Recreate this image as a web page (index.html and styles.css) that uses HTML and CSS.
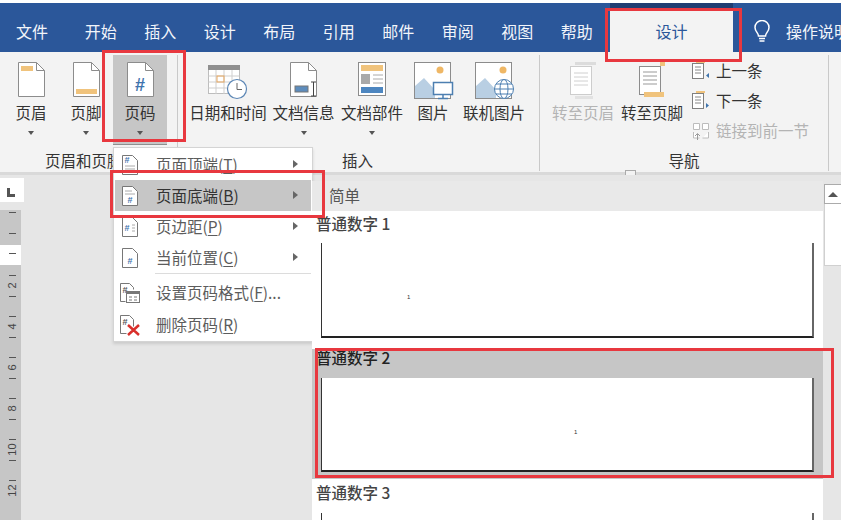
FILE: index.html
```html
<!DOCTYPE html>
<html lang="zh">
<head>
<meta charset="utf-8">
<title>页码</title>
<link rel="stylesheet" href="styles.css">
</head>
<body>
<div class="app">
  <nav class="tabs">
    <span class="tab first">文件</span>
    <span class="tab">开始</span>
    <span class="tab">插入</span>
    <span class="tab">设计</span>
    <span class="tab">布局</span>
    <span class="tab">引用</span>
    <span class="tab">邮件</span>
    <span class="tab">审阅</span>
    <span class="tab">视图</span>
    <span class="tab">帮助</span>
    <span class="tab active">设计</span>
    <svg class="bulb" width="20" height="24" viewBox="0 0 20 24"><path d="M6.500 16c0-3-3.500-4.500-3.500-8.500a7 7 0 0 1 14 0c0 4-3.500 5.500-3.500 8.500z" fill="none" stroke="#fff" stroke-width="1.500"/><path d="M7 18.500h6M7.500 21h5" stroke="#fff" stroke-width="1.500"/></svg>
    <span class="tell">操作说明</span>
  </nav>

  <section class="ribbon">
    <div class="group g1">
      <div class="row">
        <div class="rbtn w56">
          <svg width="44" height="40" viewBox="0 0 44 40"><path d="M9.500 2.500h18l8 8v26h-26z" fill="#fff" stroke="#8c8c8c"/><path d="M27.500 2.500v8h8" fill="none" stroke="#8c8c8c"/><rect x="12" y="6" width="12" height="5" fill="#f0c37c"/></svg>
          <span class="lbl">页眉</span><i class="caret"></i>
        </div>
        <div class="rbtn w54">
          <svg width="44" height="40" viewBox="0 0 44 40"><path d="M9.500 2.500h18l8 8v26h-26z" fill="#fff" stroke="#8c8c8c"/><path d="M27.500 2.500v8h8" fill="none" stroke="#8c8c8c"/><rect x="12" y="29" width="21" height="5" fill="#f0c37c"/></svg>
          <span class="lbl">页脚</span><i class="caret"></i>
        </div>
        <div class="rbtn w54 pressed">
          <svg width="44" height="40" viewBox="0 0 44 40"><path d="M9.500 2.500h18l8 8v26h-26z" fill="#fff" stroke="#8c8c8c"/><path d="M27.500 2.500v8h8" fill="none" stroke="#8c8c8c"/><text x="22" y="31" class="hash">#</text></svg>
          <span class="lbl">页码</span><i class="caret"></i>
        </div>
      </div>
      <div class="glabel">页眉和页脚</div>
    </div>

    <div class="group g2">
      <div class="row">
        <div class="rbtn w80">
          <svg width="44" height="40" viewBox="0 0 44 40"><rect x="2.500" y="5.500" width="31" height="28" fill="#fff" stroke="#bdbdbd"/><rect x="2" y="5" width="32" height="5" fill="#8f8f8f"/><path d="M2.500 16h31M2.500 22h31M2.500 28h31M10 10v24M18 10v24M26 10v24" stroke="#cfcfcf"/><rect x="11" y="16" width="7" height="6" fill="none" stroke="#e8a860"/><circle cx="31" cy="29" r="9.500" fill="#fff" stroke="#5b86b5" stroke-width="1.200"/><path d="M31 23v6.500h5" fill="none" stroke="#666"/></svg>
          <span class="lbl">日期和时间</span>
        </div>
        <div class="rbtn w71">
          <svg width="44" height="40" viewBox="0 0 44 40"><path d="M8.500 2.500h18l8 8v26h-26z" fill="#fff" stroke="#8c8c8c"/><path d="M26.500 2.500v8h8" fill="none" stroke="#8c8c8c"/><rect x="13" y="26" width="13" height="6" fill="#5d8cbc" stroke="#777"/><path d="M29 22h5M29 36h5M31.500 22v14" stroke="#444"/></svg>
          <span class="lbl">文档信息</span><i class="caret"></i>
        </div>
        <div class="rbtn w66">
          <svg width="44" height="40" viewBox="0 0 44 40"><rect x="8.500" y="2.500" width="27" height="33" fill="#fff" stroke="#8c8c8c"/><rect x="11" y="5" width="22" height="6" fill="#f0c37c"/><rect x="11" y="14" width="9" height="10" fill="#a9a9a9"/><path d="M23 15h10M23 19h10M23 23h10" stroke="#aaa"/><rect x="11" y="27" width="22" height="6" fill="#4d86c0"/></svg>
          <span class="lbl">文档部件</span><i class="caret"></i>
        </div>
        <div class="rbtn w56">
          <svg width="44" height="40" viewBox="0 0 44 40"><rect x="3.500" y="2.500" width="36" height="36" fill="#fff" stroke="#8c8c8c"/><circle cx="29" cy="10" r="3.500" fill="#efb765"/><path d="M4 38V26l9-8 11 12v8z" fill="#b9cfe3"/><rect x="22.500" y="22.500" width="19" height="12" fill="#fff" stroke="#4d7fb1" stroke-width="1.500"/><path d="M32 35v3M27 38.500h10" stroke="#4d7fb1" stroke-width="1.500"/></svg>
          <span class="lbl">图片</span>
        </div>
        <div class="rbtn w66">
          <svg width="44" height="40" viewBox="0 0 44 40"><rect x="3.500" y="2.500" width="36" height="36" fill="#fff" stroke="#8c8c8c"/><circle cx="31" cy="10" r="3.500" fill="#efb765"/><path d="M4 38V26l9-8 11 12v8z" fill="#b9cfe3"/><g fill="#fff" stroke="#4d7fb1"><circle cx="32" cy="29" r="9.500"/><ellipse cx="32" cy="29" rx="4" ry="9.500"/><path d="M22.500 29h19M24 24h16M24 34h16" fill="none"/></g></svg>
          <span class="lbl">联机图片</span>
        </div>
      </div>
      <div class="glabel">插入</div>
    </div>

    <div class="group g3">
      <div class="row">
        <div class="rbtn w70 off">
          <svg width="44" height="40" viewBox="0 0 44 40"><rect x="9.500" y="6.500" width="21" height="28" fill="#fff" stroke="#cdcdcd"/><rect x="14" y="2" width="21" height="3" fill="#dcdcdc"/><path d="M13 13h14M13 17h14M13 21h14M13 25h14" stroke="#d0d0d0"/><rect x="14" y="36" width="18" height="3" fill="#e2e2e2"/></svg>
          <span class="lbl">转至页眉</span>
        </div>
        <div class="rbtn w68">
          <svg width="44" height="40" viewBox="0 0 44 40"><rect x="9.500" y="6.500" width="21" height="28" fill="#fff" stroke="#8c8c8c"/><rect x="30" y="2" width="5" height="4" fill="#f0c37c"/><path d="M13 12h14M13 16h14M13 20h14M13 24h14" stroke="#999"/><rect x="14" y="32" width="20" height="5" fill="#f0c37c"/></svg>
          <span class="lbl">转至页脚</span>
        </div>
        <div class="nav-list">
          <div class="nav-item">
            <svg width="18" height="20" viewBox="0 0 18 20"><rect x=".5" y="2.500" width="11" height="15" fill="#fff" stroke="#808080"/><path d="M3 6h6M3 9h6M3 12h6" stroke="#888"/><rect x="4" y="0" width="9" height="2" fill="#f0c37c"/><path d="M17 12v5l-3-2.500z" fill="#3f74ad"/></svg>
            <span class="nt">上一条</span>
          </div>
          <div class="nav-item">
            <svg width="18" height="20" viewBox="0 0 18 20"><rect x=".5" y="2.500" width="11" height="15" fill="#fff" stroke="#808080"/><path d="M3 6h6M3 9h6M3 12h6" stroke="#888"/><rect x="4" y="0" width="9" height="2" fill="#f0c37c"/><path d="M14 12v5l3-2.500z" fill="#3f74ad"/></svg>
            <span class="nt">下一条</span>
          </div>
          <div class="nav-item off">
            <svg width="18" height="20" viewBox="0 0 18 20"><path d="M1.500 2.500h6v6h-6zM10.500 2.500h6v6h-6zM1.500 11v6h6M16.500 11v6h-6" fill="#fff" stroke="#bcbcbc"/><path d="M5.500 13v6M3 15l2.500-2.500L8 15" fill="none" stroke="#9a9a9a"/></svg>
            <span class="nt">链接到前一节</span>
          </div>
        </div>
      </div>
      <div class="glabel">导航</div>
    </div>
    <span class="collapse-handle"></span>
  </section>

  <main class="work">
    <aside class="rulers">
      <div class="corner"><span class="corner-l"></span></div>
      <div class="vruler">
        <div class="seg s1"><i class="cell"></i><i class="cell"></i></div>
        <div class="seg s2"><i class="cell"></i></div>
        <div class="seg s3">
          <i class="cell"><b>2</b></i><i class="cell"></i>
          <i class="cell"><b>4</b></i><i class="cell"></i>
          <i class="cell"><b>6</b></i><i class="cell"></i>
          <i class="cell"><b>8</b></i><i class="cell"></i>
          <i class="cell"><b>10</b></i><i class="cell"></i>
          <i class="cell"><b>12</b></i>
        </div>
      </div>
    </aside>
  </main>
</div>

<ul class="menu">
  <li class="mi">
    <svg width="22" height="22" viewBox="0 0 22 22"><path d="M3.500 1.500h10l5 5v14h-15z" fill="#fff" stroke="#777"/><text x="8" y="9" class="mini">#</text><path d="M6 12h10M6 15h10" stroke="#aaa"/></svg>
    <span class="mt">页面顶端(<u>T</u>)</span><i class="arrow"></i>
  </li>
  <li class="mi hover">
    <svg width="22" height="22" viewBox="0 0 22 22"><path d="M3.500 1.500h10l5 5v14h-15z" fill="#fff" stroke="#777"/><path d="M6 6h7M6 9h10" stroke="#aaa"/><text x="11" y="18" class="mini">#</text></svg>
    <span class="mt">页面底端(<u>B</u>)</span><i class="arrow"></i>
  </li>
  <li class="mi">
    <svg width="22" height="22" viewBox="0 0 22 22"><path d="M3.500 1.500h10l5 5v14h-15z" fill="#fff" stroke="#777"/><text x="8" y="15" class="mini">#</text><path d="M13 9h3M13 12h3M13 15h3" stroke="#aaa"/></svg>
    <span class="mt">页边距(<u>P</u>)</span><i class="arrow"></i>
  </li>
  <li class="mi">
    <svg width="22" height="22" viewBox="0 0 22 22"><path d="M3.500 1.500h10l5 5v14h-15z" fill="#fff" stroke="#777"/><text x="11" y="17" class="mini">#</text></svg>
    <span class="mt">当前位置(<u>C</u>)</span><i class="arrow"></i>
  </li>
  <li class="sep"></li>
  <li class="mi">
    <svg width="22" height="22" viewBox="0 0 22 22"><path d="M1.500 1.500h9l4 4v2M1.500 1.500v18h5" fill="none" stroke="#777"/><text x="6" y="11" class="mini dark">#</text><rect x="7.500" y="9.500" width="13" height="11" fill="#fff" stroke="#777"/><rect x="8" y="9" width="12" height="3" fill="#777"/><path d="M10 15h3M15 15h3M10 18h3M15 18h3" stroke="#777"/></svg>
    <span class="mt">设置页码格式(<u>F</u>)...</span>
  </li>
  <li class="mi last">
    <svg width="22" height="22" viewBox="0 0 22 22"><path d="M1.500 1.500h9l4 4v7M1.500 1.500v18h6" fill="#fff" stroke="#777"/><text x="6" y="11" class="mini dark">#</text><path d="M9 11l11 10M20 11L9 21" stroke="#d9302c" stroke-width="2.500"/></svg>
    <span class="mt">删除页码(<u>R</u>)</span>
  </li>
</ul>

<section class="gallery">
  <div class="ghead">简单</div>
  <div class="gitem">
    <div class="gtitle">普通数字 1</div>
    <div class="page"><span class="pnum left">1</span></div>
  </div>
  <div class="gitem sel">
    <div class="gtitle">普通数字 2</div>
    <div class="page"><span class="pnum mid">1</span></div>
  </div>
  <div class="gitem third">
    <div class="gtitle">普通数字 3</div>
    <div class="page"></div>
  </div>
</section>

<div class="scrollbar">
  <div class="sb-up"><i></i></div>
  <div class="sb-thumb"></div>
</div>

<div class="redbox r1"></div>
<div class="redbox r2"></div>
<div class="redbox r3"></div>
<div class="redbox r4"></div>
</body>
</html>
```
FILE: styles.css
```css
* { box-sizing: border-box; }
html, body { margin: 0; padding: 0; }
body {
  width: 841px;
  height: 520px;
  overflow: hidden;
  position: relative;
  background: #fff;
  font-family: "Noto Sans CJK SC", "Noto Sans", sans-serif;
  font-size: 15.500px;
  color: #333;
}
.app { display: flex; flex-direction: column; height: 520px; padding-top: 3px; }

/* tabs */
.tabs {
  display: flex;
  align-items: flex-start;
  height: 49px;
  flex: none;
  background: #2b579a;
  color: #f2f5fa;
  font-size: 16px;
  white-space: nowrap;
  overflow: hidden;
  padding-left: 2px;
}
.tab { flex: none; width: 59.500px; text-align: center; line-height: 56px; height: 49px; }
.tab.first { width: 60px; margin-right: 9px; }
.tab.active {
  width: 123px;
  height: 44px;
  margin: 5px 0 0 3.500px;
  line-height: 46px;
  background: #f3f3f3;
  color: #2b579a;
  box-shadow: 0 -5px 0 #1f3d72;
}
.bulb { margin: 17px 0 0 19px; flex: none; }
.tell { flex: none; margin-left: 14px; line-height: 56px; }

/* ribbon */
.ribbon {
  flex: none;
  height: 123px;
  display: flex;
  background: #f3f3f3;
  border-bottom: 3px solid #d9d9d9;
  position: relative;
}
.group {
  display: flex;
  flex-direction: column;
  height: 116px;
  margin-top: 3px;
  border-right: 1px solid #c9c9c9;
}
.g1 { width: 178px; padding-left: 3px; }
.g2 { width: 362px; padding-left: 10px; }
.g3 { width: 289px; padding-left: 8px; }
.row { display: flex; height: 90px; flex: none; }
.glabel { text-align: center; line-height: 20px; margin-top: 5px; }
.g1 .glabel { width: 110px; margin-left: 42px; text-align: left; white-space: nowrap; }
.g2 .glabel { margin-left: -12px; }
.g3 .glabel { margin-left: -8px; }
.rbtn {
  display: flex;
  flex-direction: column;
  align-items: center;
  padding-top: 5px;
  flex: none;
  white-space: nowrap;
}
.lbl { margin-top: 2px; line-height: 20px; }
.w56 { width: 56px; }
.w54 { width: 54px; }
.w80 { width: 80px; }
.w71 { width: 71px; }
.w66 { width: 66px; }
.w70 { width: 70px; }
.w68 { width: 68px; }
.pressed { background: #c6c6c6; border-bottom: 1px solid #8f8f8f; }
.off { color: #b4b4b4; }
.caret {
  width: 0;
  height: 0;
  margin-top: 9px;
  border: 3.500px solid transparent;
  border-top: 4px solid #555;
  border-bottom: 0;
}
.hash { font: bold 18px "Liberation Sans", sans-serif; fill: #3f74ad; text-anchor: middle; }
.mini { font: bold 9px "Liberation Sans", sans-serif; fill: #3f74ad; text-anchor: middle; }
.mini.dark { fill: #555; }
.nav-list { margin-left: 6px; display: flex; flex-direction: column; flex: none; }
.nav-item {
  display: flex;
  align-items: center;
  gap: 6px;
  height: 30px;
  white-space: nowrap;
}
.nt { line-height: 28px; margin-bottom: 2px; }
.nav-item:first-child { margin-top: 1px; }
.collapse-handle {
  position: absolute;
  left: 625px;
  bottom: -3px;
  width: 11px;
  height: 5px;
  border: 1px solid #aaa;
  border-bottom: 0;
  background: #f3f3f3;
}

/* work area */
.work { flex: 1; background: #e6e6e6; min-height: 0; }
.rulers { width: 24px; padding-top: 3px; }
.corner {
  width: 24px;
  height: 24px;
  background: #fff;
  position: relative;
}
.corner-l {
  position: absolute;
  left: 7px;
  top: 10px;
  width: 8px;
  height: 9px;
  border-left: 3px solid #555;
  border-bottom: 3px solid #555;
}
.vruler { width: 21px; margin-top: 8px; }
.seg { display: flex; flex-direction: column; }
.s1 { height: 35px; background: #c6c6c6; }
.s2 { height: 20px; background: #fff; }
.s3 { height: 255px; background: #c6c6c6; }
.cell { display: block; height: 20.500px; position: relative; flex: none; }
.cell::before {
  content: "";
  position: absolute;
  left: 9px;
  top: 10px;
  width: 7px;
  height: 1px;
  background: #555;
}
.s1 .cell::before { top: 2px; }
.s2 .cell::before { top: 8px; }
.cell b {
  position: absolute;
  left: 0;
  width: 24px;
  top: 13px;
  height: 15px;
  font: 11px/15px "Liberation Sans", sans-serif;
  color: #444;
  display: flex;
  align-items: center;
  justify-content: center;
  transform: rotate(-90deg);
}

/* menu */
.menu {
  position: absolute;
  left: 113px;
  top: 147px;
  width: 200px;
  height: 195px;
  margin: 0;
  padding: 1px;
  list-style: none;
  background: #fff;
  border: 1px solid #d4d4d4;
  box-shadow: 0 2px 3px rgba(0, 0, 0, .12);
  color: #5c5c5c;
}
.mi {
  display: flex;
  align-items: center;
  height: 31px;
  padding-left: 4px;
  position: relative;
  white-space: nowrap;
}
.mi.hover { background: #c6c6c6; color: #333; }
.mi.last { margin-top: 1px; }
.mt { margin: 0 0 2px 15px; }
.mt u { text-underline-offset: 2px; }
.arrow {
  position: absolute;
  left: 178px;
  top: 11px;
  border: 4px solid transparent;
  border-left: 5px solid #666;
  border-right: 0;
}
.sep { height: 1px; margin: 0 0 3px 40px; background: #dcdcdc; }

/* gallery */
.gallery {
  position: absolute;
  left: 312px;
  top: 181px;
  width: 511px;
  height: 339px;
  background: #fff;
  overflow: hidden;
}
.ghead {
  height: 30px;
  line-height: 28px;
  padding-left: 17px;
  background: #e9e9e9;
  color: #555;
}
.gitem { padding: 3px 9px 11px; }
.gitem.sel { background: #c6c6c6; padding: 0 9px 7px; }
.gitem.third { padding-top: 4px; }
.gtitle {
  font-weight: 500;
  height: 20px;
  line-height: 19px;
  margin-left: -5px;
  color: #444;
}
.gitem.sel .gtitle { color: #222; height: 18px; line-height: 17px; }
.page {
  position: relative;
  width: 493px;
  height: 95px;
  margin-top: 9px;
  background: #fff;
  border-left: 1px solid #333;
  border-right: 2px solid #666;
  border-bottom: 2px solid #222;
}
.gitem.sel .page { margin-top: 11px; height: 94px; }
.gitem.third .page { margin-top: 10px; }
.pnum {
  position: absolute;
  font: 6px/8px "Liberation Sans", sans-serif;
  color: #333;
}
.pnum.left { left: 85px; top: 50px; }
.pnum.mid { left: 252px; top: 50px; }

/* scrollbar */
.scrollbar {
  position: absolute;
  left: 823px;
  top: 181px;
  width: 18px;
  height: 339px;
  background: #e6e6e6;
  padding-top: 3px;
  padding-left: 1px;
}
.sb-up {
  height: 20px;
  background: #fff;
  border: 1px solid #ababab;
  border-right: 0;
  display: flex;
  align-items: center;
  justify-content: center;
}
.sb-up i {
  border: 5px solid transparent;
  border-bottom: 5px solid #555;
  border-top: 0;
}
.sb-thumb {
  height: 62px;
  background: #fff;
  border: 1px solid #d0d0d0;
  border-top: 0;
  border-right: 0;
}

/* red annotation frames */
.redbox { position: absolute; border: 3px solid #e8383f; pointer-events: none; }
.r1 { left: 102px; top: 50px; width: 84px; height: 92px; }
.r2 { left: 605px; top: 8px; width: 137px; height: 54px; }
.r3 { left: 110px; top: 170px; width: 215px; height: 48px; }
.r4 { left: 315px; top: 348px; width: 519px; height: 130px; }
```
